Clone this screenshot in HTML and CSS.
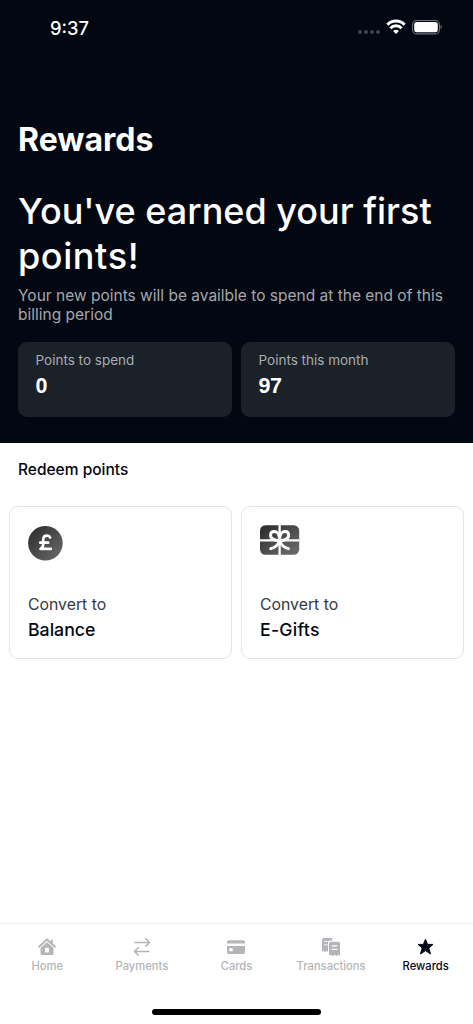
FILE: index.html
```html
<!DOCTYPE html>
<html lang="en">
<head>
<meta charset="utf-8">
<title>Rewards</title>
<link rel="stylesheet" href="styles.css">
</head>
<body>
<div class="screen">
  <header class="hero">
    <div class="status">
      <span class="time">9:37</span>
      <svg class="status-icons" width="86" height="18" viewBox="0 0 86 18">
        <g fill="#3c424b"><circle cx="4" cy="14" r="2.1"/><circle cx="10" cy="14" r="2.1"/><circle cx="16" cy="14" r="2.1"/><circle cx="22" cy="14" r="2.1"/></g>
        <g fill="none" stroke="#fff" stroke-width="2.9"><path d="M31.4 6.7a11.8 11.8 0 0 1 17.2 0"/><path d="M34.4 10.2a7.6 7.6 0 0 1 11.2 0"/></g>
        <path fill="#fff" d="M40 16.1l-2.9-3a4.2 4.2 0 0 1 5.8 0z"/>
        <rect x="56.6" y="2.5" width="26.8" height="13.4" rx="4" fill="none" stroke="#6d7178" stroke-width="1.1"/>
        <rect x="58.2" y="4.1" width="23.6" height="10.2" rx="2.5" fill="#fff"/>
        <path d="M84.6 7v4.2q1.3-.6 1.3-2.1t-1.3-2.1z" fill="#6d7178"/>
      </svg>
    </div>
    <h1 class="title">Rewards</h1>
    <p class="headline">You've earned your first<br><span class="headline-end">points!</span></p>
    <p class="note">Your new points will be availble to spend at the end of this<br>billing period</p>
    <div class="stats">
      <div class="stat"><span class="stat-label">Points to spend</span><span class="stat-value">0</span></div>
      <div class="stat"><span class="stat-label">Points this month</span><span class="stat-value">97</span></div>
    </div>
  </header>
  <main class="content">
    <h2 class="section">Redeem points</h2>
    <div class="options">
      <div class="option">
        <svg class="option-icon" width="40" height="36" viewBox="0 0 40 36">
          <defs><linearGradient id="coin" x1="0" y1="0" x2="1" y2="1"><stop offset="0.1" stop-color="#303030"/><stop offset="1" stop-color="#6c6c6c"/></linearGradient></defs>
          <circle cx="17.4" cy="18.2" r="17.3" fill="url(#coin)"/>
          <path d="M22.1 12.4c-.5-1.2-1.6-1.7-3-1.7-2.5 0-3.9 1.5-3.900 3.900v4.600c0 2.100-.7 3.700-2.700 4.700h10.300M12.200 17.700h8" fill="none" stroke="#fff" stroke-width="2.700" stroke-linecap="round" stroke-linejoin="round"/>
        </svg>
        <span class="convert">Convert to</span><span class="target balance">Balance</span>
      </div>
      <div class="option">
        <svg class="option-icon" width="40" height="36" viewBox="0 0 40 36">
          <defs><linearGradient id="gift" x1="0" y1="0" x2="1" y2="1"><stop offset="0.1" stop-color="#303030"/><stop offset="1" stop-color="#707070"/></linearGradient></defs>
          <rect x="0" y="0.2" width="39.2" height="29.6" rx="5.5" fill="url(#gift)"/>
          <g fill="none" stroke="#fff" stroke-width="2.3"><path d="M0 15.4h39.2M19.6 0v30"/></g>
          <g fill="none" stroke="#fff" stroke-width="2.9" stroke-linecap="round"><path d="M19.6 15.4c-4.3.3-9.1-1.3-9.1-5.1 0-2.3 1.6-3.8 3.8-3.8 3.8 0 5.3 4.5 5.3 8.9zM19.6 15.4c4.3.3 9.1-1.3 9.1-5.1 0-2.3-1.6-3.8-3.8-3.8-3.8 0-5.3 4.5-5.3 8.9z"/><path d="M19.6 15.4c-1.2 4.2-4 7-8.9 8.3M19.6 15.4c1.2 4.2 4 7 8.900 8.300"/></g>
        </svg>
        <span class="convert">Convert to</span><span class="target">E-Gifts</span>
      </div>
    </div>
  </main>
  <nav class="tabs">
    <div class="tab">
      <svg width="20" height="20" viewBox="0 0 20 20"><path d="M1.5 10.2 10 2.6l8.500 7.600M14.900 2.800v4" fill="none" stroke="currentColor" stroke-width="1.900"/><path fill="currentColor" fill-rule="evenodd" d="M10 5.200l6.500 5.800v5.400q0 1.600-1.600 1.600H5.100q-1.600 0-1.600-1.600V11zM8.100 10.700v4.900h3.800v-4.900z"/></svg>
      <span>Home</span>
    </div>
    <div class="tab">
      <svg width="20" height="20" viewBox="0 0 20 20"><path d="M2.500 5.500h15M13.400 1.400l4.100 4.100-4.100 4.100M17.500 14.400h-15M6.600 10.300l-4.100 4.100 4.100 4.100" fill="none" stroke="currentColor" stroke-width="1.500"/></svg>
      <span>Payments</span>
    </div>
    <div class="tab">
      <svg width="20" height="20" viewBox="0 0 20 20"><path fill="currentColor" fill-rule="evenodd" d="M2.700 3.200h14.600q1.700 0 1.700 1.700v1.500H1V4.900q0-1.700 1.700-1.700zM1 9h18v6.200q0 1.700-1.700 1.700H2.700Q1 16.900 1 15.200zM3.300 11.200v3h3.400v-3z"/></svg>
      <span>Cards</span>
    </div>
    <div class="tab">
      <svg width="20" height="20" viewBox="0 0 20 20"><path fill="currentColor" d="M1 14.700V3Q1 1 3 1h8.200v2.600H9q-2 0-2 2V15l-1.500-1.200L4 15.200l-1.500-1.400z"/><path d="M3.200 4.400h3.300M3.200 7.800h3.300" stroke="#fff" stroke-width="1"/><path fill="currentColor" d="M8 18.800V6.700q0-2 2-2h7q2 0 2 2v12.100l-1.600-1-1.900 1.200-2-1.200-2 1.200-1.900-1.200z"/><path d="M10.700 8.900h5.600M10.700 12.300h5.600" stroke="#fff" stroke-width="1.200"/></svg>
      <span>Transactions</span>
    </div>
    <div class="tab active">
      <svg width="20" height="20" viewBox="0 0 20 20"><path fill="currentColor" stroke="currentColor" stroke-linejoin="round" d="M9.500 2.300l2.100 5.100H17l-4.200 3.500 1.700 6.100-5-3.400-5 3.400 1.700-6.100L2 7.400h5.400z"/></svg>
      <span>Rewards</span>
    </div>
  </nav>
  <div class="home-bar"></div>
</div>
</body>
</html>
```
FILE: styles.css
```css
* { box-sizing: border-box; margin: 0; padding: 0; }
body { background: #fff; font-family: Inter, "Liberation Sans", sans-serif; color: #020713; }
.screen { display: flex; flex-direction: column; width: 473px; height: 1024px; }
.hero { height: 443px; padding: 0 18px; background: #020712; color: #fff; }
.status { display: flex; justify-content: space-between; padding: 18px 13px 0 32px; height: 54px; }
.time { font-size: 18.3px; line-height: 20px; font-weight: 500; }
.title { margin-top: 66px; font-size: 32px; line-height: 40px; font-weight: 700; white-space: nowrap; }
.headline { margin-top: 29px; font-size: 36px; line-height: 44.5px; font-weight: 450; white-space: nowrap; }
.headline-end { letter-spacing: 0.6px; }
.note { margin-top: 8px; font-size: 15.5px; line-height: 19px; color: #a5a7ab; white-space: nowrap; }
.stats { display: grid; grid-template-columns: 1fr 1fr; gap: 9px; margin-top: 18px; }
.stat { display: flex; flex-direction: column; height: 75px; padding: 9px 17.5px; border-radius: 9px; background: #1b2129; }
.stat-label { font-size: 13.5px; line-height: 18px; color: #a9acb0; white-space: nowrap; }
.stat-value { margin-top: 5px; font: 700 21.5px/24px "Liberation Sans", sans-serif; letter-spacing: -0.4px; }
.content { flex: 1; padding: 17px 9px 0; }
.section { padding-left: 9px; font-size: 15.5px; line-height: 20px; font-weight: 450; }
.options { display: grid; grid-template-columns: 1fr 1fr; gap: 9px; margin-top: 26px; }
.option { display: flex; flex-direction: column; align-items: flex-start; height: 153px; padding: 18px 18px 0; border: 1px solid #e4e5e6; border-radius: 9px; }
.option-icon { flex-shrink: 0; }
.convert { margin-top: 34px; font-size: 15.8px; line-height: 20px; color: #343843; }
.target { margin-top: 3px; font-size: 17.7px; line-height: 24px; font-weight: 450; letter-spacing: 0.25px; }
.balance { letter-spacing: 0; }
.tabs { display: grid; grid-template-columns: repeat(5, 1fr); height: 86px; padding-top: 13px; border-top: 1px solid #f0f0f1; }
.tab { display: flex; flex-direction: column; align-items: center; color: #b3b5b8; font-size: 11.2px; line-height: 14px; font-weight: 450; }
.tab span { margin-top: 2px; }
.active { color: #020713; font-weight: 500; }
.home-bar { width: 169px; height: 6px; margin: 0 auto 9px; border-radius: 3px; background: #000; }
```
